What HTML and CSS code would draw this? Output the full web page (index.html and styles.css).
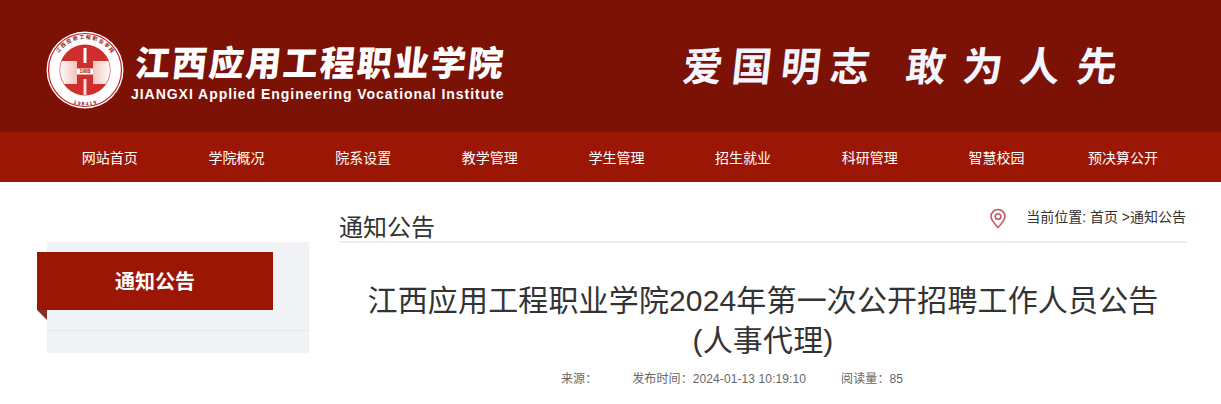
FILE: index.html
```html
<!DOCTYPE html>
<html lang="zh-CN">
<head>
  <meta charset="UTF-8"/>
  <title>江西应用工程职业学院</title>
  <link rel="stylesheet" href="styles.css">
</head>
<body>

  <!-- Header -->
  <div class="header">
    <svg class="logo" width="78" height="78" viewBox="-39 -39 78 78">
      <defs>
        <path id="ring-top" d="M -31 6 A 31.5 31.5 0 1 1 31 6"/>
        <path id="ring-bottom" d="M -24 26 A 35 35 0 0 0 24 26"/>
        <linearGradient id="block-left" x1="0" x2="1" y1="0" y2="0">
          <stop offset="0" stop-color="#fff"/>
          <stop offset="1" stop-color="#f2c4bd"/>
        </linearGradient>
        <linearGradient id="block-right" x1="0" x2="1" y1="0" y2="0">
          <stop offset="0" stop-color="#f2c4bd"/>
          <stop offset="1" stop-color="#fff"/>
        </linearGradient>
        <clipPath id="inner"><circle r="25"/></clipPath>
      </defs>
      <circle r="38.5" fill="#fff"/>
      <circle r="36.5" fill="none" stroke="#c8202a" stroke-width="1.2"/>
      <circle r="25.5" fill="#cf2f2c"/>
      <g clip-path="url(#inner)">
        <rect x="-26" y="-9" width="18" height="23" fill="url(#block-left)"/>
        <rect x="8" y="-9" width="18" height="23" fill="url(#block-right)"/>
        <rect x="-1.5" y="-22" width="3" height="15" fill="#fff"/>
        <rect x="-1.5" y="9" width="3" height="16" fill="#f7d9d4"/>
        <rect x="-8" y="-1.5" width="16" height="6" fill="#fff"/>
        <text class="logo-year" y="3.4" text-anchor="middle">1988</text>
      </g>
      <text class="logo-ring"><textPath href="#ring-top" startOffset="50%" text-anchor="middle">江 西 应 用 工 程 职 业 学 院</textPath></text>
      <text class="logo-ring"><textPath href="#ring-bottom" startOffset="50%" text-anchor="middle">1 9 8 4 1 9</textPath></text>
    </svg>
    <div class="brand">
      <div class="brand-name">
        <span>江</span><span>西</span><span>应</span><span>用</span><span>工</span><span>程</span><span>职</span><span>业</span><span>学</span><span>院</span>
      </div>
      <div class="brand-en">JIANGXI Applied Engineering Vocational Institute</div>
    </div>
    <div class="slogan">
      <div class="slogan-part"><span>爱</span><span>国</span><span>明</span><span>志</span></div>
      <div class="slogan-part slogan-wide"><span>敢</span><span>为</span><span>人</span><span>先</span></div>
    </div>
  </div>

  <!-- Navigation -->
  <div class="nav">
    <a class="nav-item">网站首页</a>
    <a class="nav-item">学院概况</a>
    <a class="nav-item">院系设置</a>
    <a class="nav-item">教学管理</a>
    <a class="nav-item">学生管理</a>
    <a class="nav-item">招生就业</a>
    <a class="nav-item">科研管理</a>
    <a class="nav-item">智慧校园</a>
    <a class="nav-item">预决算公开</a>
  </div>

  <!-- Page body -->
  <div class="page">
    <div class="sidebar">
      <div class="side-title">通知公告</div>
      <div class="side-rule"></div>
    </div>

    <div class="main">
      <div class="crumb-bar">
        <h2 class="crumb-title">通知公告</h2>
        <div class="crumbs">
          <svg class="pin" width="18" height="21" viewBox="0 0 18 21">
            <path d="M9 19.5 C6 16 2 12.6 2 8.6 A7 7 0 0 1 16 8.6 C16 12.6 12 16 9 19.5 Z" fill="none" stroke="#c2555b" stroke-width="1.5"/>
            <circle cx="9" cy="8.5" r="2.8" fill="none" stroke="#c2555b" stroke-width="1.5"/>
          </svg>
          <span>当前位置: 首页 &gt;通知公告</span>
        </div>
      </div>
      <h1 class="article-title">江西应用工程职业学院2024年第一次公开招聘工作人员公告<br>(人事代理)</h1>
      <div class="meta">
        <span>来源：</span>
        <span>发布时间：2024-01-13 10:19:10</span>
        <span>阅读量：85</span>
      </div>
    </div>
  </div>

</body>
</html>
```

FILE: styles.css
```css
body {
  margin: 0;
  font-family: "Liberation Sans", "Noto Sans CJK SC", sans-serif;
  color: #333;
  background: #fff;
  overflow: hidden;
}
/* Header */
.header {
  display: flex;
  align-items: center;
  height: 132px;
  padding: 8px 0 0 46px;
  box-sizing: border-box;
  background: #7c1105;
  color: #fff;
}
.logo {
  flex: none;
}
.logo-ring {
  font-size: 5px;
  font-weight: 700;
  fill: #8c1a14;
}
.logo-year {
  font-size: 5px;
  font-weight: 700;
  fill: #8c1a14;
}
.brand {
  display: flex;
  flex-direction: column;
  margin: 4px 0 0 7px;
  width: 380px;
}
.brand-name {
  display: flex;
  justify-content: space-between;
  width: 368px;
  margin-left: 4px;
  font-size: 35px;
  font-weight: 900;
  line-height: 42px;
}
.brand-name span {
  display: inline-block;
  transform: skewX(-6deg);
}
.brand-en {
  margin-top: 2px;
  font-size: 14px;
  font-weight: 700;
  letter-spacing: 0.96px;
  line-height: 15px;
  white-space: nowrap;
}
.slogan {
  display: flex;
  gap: 36px;
  margin: -6px 0 0 172px;
  color: #f3f6ff;
}
.slogan-part {
  display: flex;
  gap: 9px;
  font-size: 40px;
  font-weight: 700;
  line-height: 50px;
}
.slogan-wide {
  gap: 17px;
}
.slogan-part span {
  display: inline-block;
  transform: skewX(-6deg);
}
/* Navigation */
.nav {
  display: flex;
  height: 50px;
  padding-left: 46.5px;
  background: #9c1606;
}
.nav-item {
  width: 126.67px;
  text-align: center;
  font-size: 14px;
  line-height: 52px;
  color: #fff;
  white-space: nowrap;
}
/* Page body */
.page {
  display: flex;
  align-items: flex-start;
  padding-left: 47px;
}
.sidebar {
  position: relative;
  width: 262px;
  height: 111px;
  margin-top: 60px;
  background: #f1f2f6;
}
.side-title {
  position: absolute;
  left: -10px;
  top: 10px;
  width: 236px;
  height: 58px;
  background: #9c1606;
  color: #fff;
  font-size: 20px;
  font-weight: 700;
  line-height: 60px;
  text-align: center;
}
.side-title::after {
  content: "";
  position: absolute;
  left: 0;
  top: 58px;
  border-top: 10px solid #8c2d2d;
  border-left: 10px solid transparent;
}
.side-rule {
  margin-top: 88px;
  border-top: 1px solid #e4e5ea;
}
.main {
  width: 848px;
  margin-left: 30px;
}
.crumb-bar {
  display: flex;
  justify-content: space-between;
  height: 59px;
  border-bottom: 2px solid #eee;
}
.crumb-title {
  margin: 30px 0 0;
  font-size: 24px;
  font-weight: 400;
  line-height: 32px;
  color: #333;
}
.crumbs {
  display: flex;
  align-items: center;
  height: 24px;
  margin: 24px 1px 0 0;
  font-size: 14px;
  line-height: 22px;
  color: #333;
}
.crumbs span {
  padding-bottom: 2px;
}
.pin {
  margin-right: 19px;
}
.article-title {
  margin: 38px 0 0;
  font-size: 30px;
  font-weight: 400;
  letter-spacing: 0.15px;
  line-height: 40px;
  text-align: center;
  color: #333;
}
.meta {
  display: flex;
  justify-content: center;
  gap: 35px;
  margin-top: 8px;
  padding-right: 62px;
  font-size: 12px;
  letter-spacing: 0.1px;
  line-height: 20px;
  color: #666;
}
```
